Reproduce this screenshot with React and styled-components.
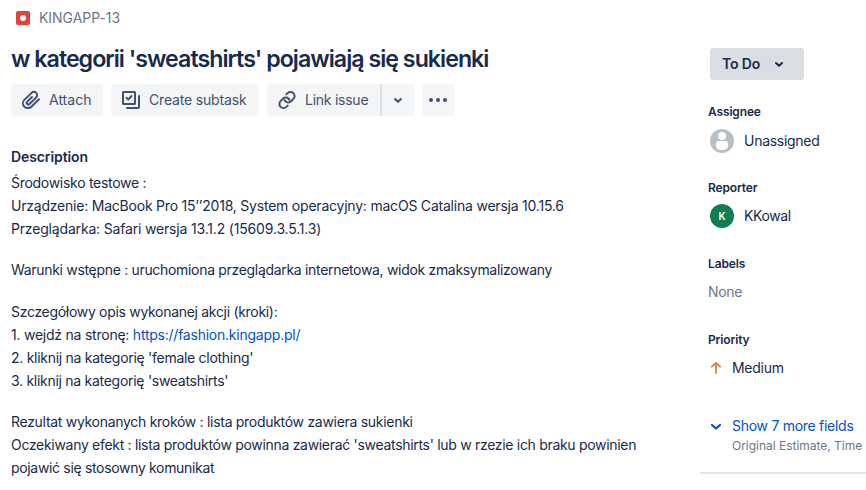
import React from 'react';
import styled, { createGlobalStyle } from 'styled-components';

const Global = createGlobalStyle`
  * { box-sizing: border-box; }
  body { margin: 0; background: #fff; color: #172b4d; font: 14px/23px Inter, "Liberation Sans", sans-serif; overflow: hidden; }
  svg { display: block; flex: none; }
`;

const Page = styled.div`
  display: flex;
  width: 866px;
  height: 490px;
  overflow: hidden;
`;
const Main = styled.main`
  width: 700px;
  flex: none;
  padding: 8px 0 0 11px;
`;
const Crumb = styled.div`
  display: flex;
  align-items: center;
  gap: 9px;
  height: 20px;
  padding-left: 5px;
  color: #6b778c;
  line-height: 20px;
`;
const Line = styled.span`
  display: block;
  width: max-content;
  white-space: nowrap;
  letter-spacing: ${(p) => p.$ls || 0}px;
`;
const Title = styled.h1`
  margin: 17px 0 0;
  height: 28px;
  font-size: 23.2px;
  line-height: 28px;
  font-weight: 600;
`;
const Toolbar = styled.div`
  display: flex;
  gap: 8px;
  margin-top: 11px;
  color: #42526e;
`;
const Split = styled.div`
  display: flex;
`;
const Button = styled.button`
  display: flex;
  align-items: center;
  gap: 6px;
  width: ${(p) => p.$w}px;
  height: 32px;
  padding: 0 0 0 ${(p) => p.$pad ?? 8}px;
  border: 0;
  border-left: ${(p) => (p.$divided ? '2px solid #dcdfe5' : '0')};
  border-radius: ${(p) => p.$radius || '3px'};
  background: #f4f5f7;
  color: inherit;
  font: inherit;
  line-height: 20px;
`;
const Heading = styled.h2`
  margin: 31px 0 0;
  font-size: 14px;
  line-height: 20px;
  font-weight: 600;
`;
const Paragraph = styled.div`
  margin-top: ${(p) => p.$mt}px;
`;
const Link = styled.a`
  color: #0052cc;
`;
const Side = styled.aside`
  width: 166px;
  flex: none;
  padding-top: 48px;
`;
const Status = styled.button`
  display: flex;
  align-items: center;
  gap: 7px;
  width: 94px;
  height: 32px;
  margin-left: 10px;
  padding: 0 0 0 12px;
  border: 0;
  border-radius: 3px;
  background: #dadde2;
  color: #172b4d;
  font: 600 14px/32px Inter, "Liberation Sans", sans-serif;
`;
const Field = styled.section`
  height: 76px;
  padding-left: 8px;
`;
const Fields = styled.div`
  padding-top: 22px;
`;
const Label = styled.h3`
  margin: 0;
  font-size: 12px;
  line-height: 20px;
  font-weight: 600;
`;
const Value = styled.div`
  display: flex;
  align-items: center;
  gap: ${(p) => p.$gap || 0}px;
  height: 24px;
  margin-top: ${(p) => p.$mt ?? 7}px;
  padding-left: ${(p) => p.$pad || 0}px;
  color: ${(p) => p.$color || 'inherit'};
  line-height: 20px;
`;
const Avatar = styled.span`
  display: flex;
  align-items: center;
  justify-content: center;
  width: 24px;
  height: 24px;
  border-radius: 50%;
  background: #0f7f52;
  color: #fff;
  font-size: 10px;
  font-weight: 600;
`;
const More = styled.div`
  height: 58px;
  margin-top: 10px;
  padding-left: 10px;
  border-bottom: 2px solid #e4e6ea;
`;
const MoreTitle = styled.div`
  display: flex;
  align-items: center;
  gap: 10px;
  height: 20px;
  color: #0052cc;
  line-height: 20px;
`;
const MoreText = styled.div`
  padding-left: 22px;
  color: #6b778c;
  font-size: 12px;
  line-height: 20px;
`;

const BugIcon = () => (
  <svg width="14" height="14" viewBox="0 0 14 14">
    <rect width="14" height="14" rx="2" fill="#e5403a" />
    <circle cx="7" cy="7" r="3" fill="#fff" />
  </svg>
);
const AttachIcon = () => (
  <svg width="24" height="24" viewBox="0 0 24 24">
    <path fill="currentColor" d="M11.643 17.965c-1.53 1.495-4.016 1.496-5.542.004a3.773 3.773 0 0 1 .002-5.412l7.147-6.985a2.316 2.316 0 0 1 3.22-.004c.892.872.892 2.28.004 3.149l-6.703 6.55a.653.653 0 0 1-.914-.07.64.64 0 0 1 .066-.82l4.74-4.622a.997.997 0 0 0 .014-1.414 1.003 1.003 0 0 0-1.41-.015l-4.737 4.622a2.618 2.618 0 0 0 .001 3.75 2.659 2.659 0 0 0 3.64.001l6.7-6.55c1.678-1.642 1.678-4.368-.004-6.011a4.331 4.331 0 0 0-6.015.004L4.705 11.126a5.76 5.76 0 0 0-.001 8.273c2.304 2.252 6.035 2.25 8.338-.004l7.657-7.482a.997.997 0 0 0 .016-1.414 1.003 1.003 0 0 0-1.413-.016l-7.659 7.482z" />
  </svg>
);
const SubtaskIcon = () => (
  <svg width="24" height="24" viewBox="0 0 24 24" fill="none" stroke="currentColor" strokeWidth="2" strokeLinejoin="round" strokeLinecap="round">
    <rect x="4" y="4" width="12" height="12" rx="0.6" />
    <path d="M7.5 9.8 9.3 11.5 12.6 8" />
    <path d="M20 8v11a1 1 0 0 1-1 1H8" />
  </svg>
);
const LinkIcon = () => (
  <svg width="24" height="24" viewBox="0 0 24 24" fill="none" stroke="currentColor" strokeWidth="2" strokeLinecap="round">
    <path d="M12.700 17.600 11.400 18.900a4.100 4.100 0 0 1-5.800 0 4.100 4.100 0 0 1 0-5.800l2.300-2.300a4.100 4.100 0 0 1 5.800 0l.8 1" />
    <path d="M11.300 6.400l1.300-1.300a4.100 4.100 0 0 1 5.800 0 4.100 4.100 0 0 1 0 5.800l-2.300 2.300a4.100 4.100 0 0 1-5.800 0l-.8-1" />
  </svg>
);
const Chevron = () => (
  <svg width="24" height="24" viewBox="0 0 24 24" fill="none" stroke="currentColor" strokeWidth="2" strokeLinecap="round" strokeLinejoin="round">
    <path d="M9 11l3 2.8L15 11" />
  </svg>
);
const DotsIcon = () => (
  <svg width="24" height="24" viewBox="0 0 24 24" fill="currentColor">
    <circle cx="5" cy="12" r="2" />
    <circle cx="12" cy="12" r="2" />
    <circle cx="19" cy="12" r="2" />
  </svg>
);
const PersonIcon = () => (
  <svg width="24" height="24" viewBox="0 0 24 24">
    <circle cx="12" cy="12" r="12" fill="#b8bfca" />
    <circle cx="12" cy="7" r="4" fill="#fff" />
    <path fill="#fff" d="M6 14.500A2.500 2.500 0 0 1 8.500 12h7A2.500 2.500 0 0 1 18 14.500v3c0 2-2.500 3.500-6 3.500s-6-1.500-6-3.500z" />
  </svg>
);
const UpIcon = () => (
  <svg width="12" height="14" viewBox="0 0 12 14" fill="none" stroke="#ed7b2f" strokeWidth="1.8" strokeLinecap="round" strokeLinejoin="round">
    <path d="M6 12V1.800M1.800 5.700 6 1.800l4.200 3.900" />
  </svg>
);
const MoreChevron = () => (
  <svg width="12" height="12" viewBox="0 0 12 12" fill="none" stroke="currentColor" strokeWidth="2.200" strokeLinecap="round" strokeLinejoin="round">
    <path d="M2 5l4 3.500L10 5" />
  </svg>
);

export default function App() {
  return (
    <>
      <Global />
      <Page>
        <Main>
          <Crumb><BugIcon /><Line $ls={-0.05}>KINGAPP-13</Line></Crumb>
          <Title><Line $ls={-0.98}>w kategorii 'sweatshirts' pojawiają się sukienki</Line></Title>
          <Toolbar>
            <Button $w={92}><AttachIcon /><Line>Attach</Line></Button>
            <Button $w={148}><SubtaskIcon /><Line $ls={-0.17}>Create subtask</Line></Button>
            <Split>
              <Button $w={113} $radius="3px 0 0 3px"><LinkIcon /><Line $ls={-0.25}>Link issue</Line></Button>
              <Button $w={34} $pad={4} $divided $radius="0 3px 3px 0"><Chevron /></Button>
            </Split>
            <Button $w={32} $pad={4}><DotsIcon /></Button>
          </Toolbar>
          <Heading><Line $ls={-0.1}>Description</Line></Heading>
          <Paragraph $mt={4}>
            <Line $ls={-0.29}>Środowisko testowe :</Line>
            <Line $ls={-0.215}>Urządzenie: MacBook Pro 15’’2018, System operacyjny: macOS Catalina wersja 10.15.6</Line>
            <Line $ls={-0.175}>Przeglądarka: Safari wersja 13.1.2 (15609.3.5.1.3)</Line>
          </Paragraph>
          <Paragraph $mt={18}><Line $ls={-0.315}>Warunki wstępne : uruchomiona przeglądarka internetowa, widok zmaksymalizowany</Line></Paragraph>
          <Paragraph $mt={19}>
            <Line $ls={-0.305}>Szczegółowy opis wykonanej akcji (kroki):</Line>
            <Line $ls={-0.235}>1. wejdź na stronę: <Link>https://fashion.kingapp.pl/</Link></Line>
            <Line $ls={-0.28}>2. kliknij na kategorię 'female clothing'</Line>
            <Line $ls={-0.28}>3. kliknij na kategorię 'sweatshirts'</Line>
          </Paragraph>
          <Paragraph $mt={18}>
            <Line $ls={-0.295}>Rezultat wykonanych kroków : lista produktów zawiera sukienki</Line>
            <Line $ls={-0.305}>Oczekiwany efekt : lista produktów powinna zawierać 'sweatshirts' lub w rzezie ich braku powinien</Line>
            <Line $ls={-0.33}>pojawić się stosowny komunikat</Line>
          </Paragraph>
        </Main>
        <Side>
          <Status><Line $ls={-0.15}>To Do</Line><Chevron /></Status>
          <Fields>
            <Field>
              <Label><Line $ls={-0.15}>Assignee</Line></Label>
              <Value $gap={10} $pad={2}><PersonIcon /><Line $ls={-0.28}>Unassigned</Line></Value>
            </Field>
            <Field>
              <Label><Line $ls={-0.15}>Reporter</Line></Label>
              <Value $gap={10} $pad={2} $mt={6}><Avatar>K</Avatar><Line $ls={-0.4}>KKowal</Line></Value>
            </Field>
            <Field>
              <Label><Line $ls={-0.15}>Labels</Line></Label>
              <Value $color="#6b778c" $mt={6}><Line $ls={-0.3}>None</Line></Value>
            </Field>
            <Field>
              <Label><Line $ls={-0.15}>Priority</Line></Label>
              <Value $gap={10} $pad={2} $mt={6}><UpIcon /><Line $ls={-0.28}>Medium</Line></Value>
            </Field>
          </Fields>
          <More>
            <MoreTitle><MoreChevron /><Line $ls={-0.28}>Show 7 more fields</Line></MoreTitle>
            <MoreText><Line $ls={-0.02}>Original Estimate, Time</Line></MoreText>
          </More>
        </Side>
      </Page>
    </>
  );
}
